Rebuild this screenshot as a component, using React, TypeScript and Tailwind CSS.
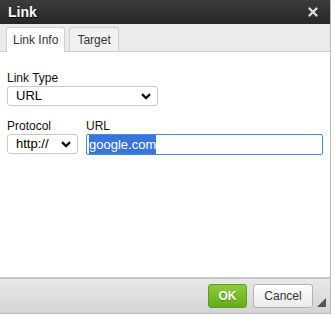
import { X } from "lucide-react";

function Chevron() {
  return (
    <svg width="10" height="7" viewBox="0 0 10 7" className="shrink-0">
      <path d="M1 1.2 L5 5 L9 1.2" fill="none" stroke="#111" strokeWidth="2.4" />
    </svg>
  );
}

function SelectBox({ value, className }: { value: string; className: string }) {
  return (
    <div
      className={`flex h-[20px] items-center justify-between rounded-[3px] border border-[#c9c9c9] bg-white pl-[8px] pr-[6px] text-[13px] text-black ${className}`}
    >
      <span>{value}</span>
      <Chevron />
    </div>
  );
}

export default function App() {
  return (
    <div className="h-[315px] w-[334px] bg-white [font-family:'Liberation_Sans',Arial,sans-serif]">
      <div className="flex h-[314px] w-[331px] flex-col border-r border-b border-[#b9b9b9]">
        {/* title bar */}
        <div className="flex h-[24px] items-center justify-between bg-gradient-to-b from-[#3c3c3c] to-[#262626] pl-[8px] pr-[10px]">
          <span className="text-[14px] font-bold text-white [text-shadow:0_1px_0_#000]">Link</span>
          <X className="h-[14px] w-[14px] text-[#dcdcdc]" strokeWidth={4} />
        </div>

        {/* tabs */}
        <div className="flex h-[28px] items-end gap-[4px] border-b border-[#cfcfcf] bg-[#ebebeb] pl-[6px]">
          <div className="-mb-px flex h-[25px] items-center rounded-t-[3px] border border-b-0 border-[#cfcfcf] bg-white px-[6px] text-[12px] text-[#333]">
            Link Info
          </div>
          <div className="flex h-[24px] items-center rounded-t-[3px] border border-b-0 border-[#cfcfcf] bg-[#f1f1f1] px-[7px] text-[12px] text-[#333]">
            Target
          </div>
        </div>

        {/* body */}
        <div className="flex flex-1 flex-col bg-white px-[7px] pt-[19px]">
          <label className="text-[12px] leading-[14px] text-[#111]">Link Type</label>
          <SelectBox value="URL" className="mt-[1px] w-[151px]" />

          <div className="mt-[13px] flex gap-[8px]">
            <div className="flex flex-col">
              <label className="text-[12px] leading-[14px] text-[#111]">Protocol</label>
              <SelectBox value="http://" className="mt-[1px] w-[71px]" />
            </div>
            <div className="flex flex-1 flex-col">
              <label className="text-[12px] leading-[14px] text-[#111]">URL</label>
              <div className="mt-[1px] flex h-[21px] items-center rounded-[2px] border border-[#2c96e8] bg-white pl-[2px] text-[13px]">
                <span className="bg-[#3b74d8] text-white">google.com</span>
              </div>
            </div>
          </div>
        </div>

        {/* footer */}
        <div className="relative flex h-[36px] items-center justify-end gap-[6px] border-t-2 border-[#c7c7c7] bg-gradient-to-b from-[#e8e8e8] to-[#d4d4d4] pr-[17px]">
          <button className="h-[24px] w-[39px] rounded-[3px] border border-[#5e9f1c] bg-gradient-to-b from-[#8ecb3b] to-[#63ac19] text-[12px] font-bold text-white [text-shadow:0_1px_0_#4b8a10]">
            OK
          </button>
          <button className="h-[24px] w-[60px] rounded-[3px] border border-[#b3b3b3] bg-gradient-to-b from-[#ffffff] to-[#eaeaea] text-[12px] text-[#333]">
            Cancel
          </button>
          <svg width="9" height="9" viewBox="0 0 9 9" className="absolute right-[4px] bottom-[6px]">
            <path d="M9 0 L9 9 L0 9 Z" fill="#555" />
          </svg>
        </div>
      </div>
    </div>
  );
}
